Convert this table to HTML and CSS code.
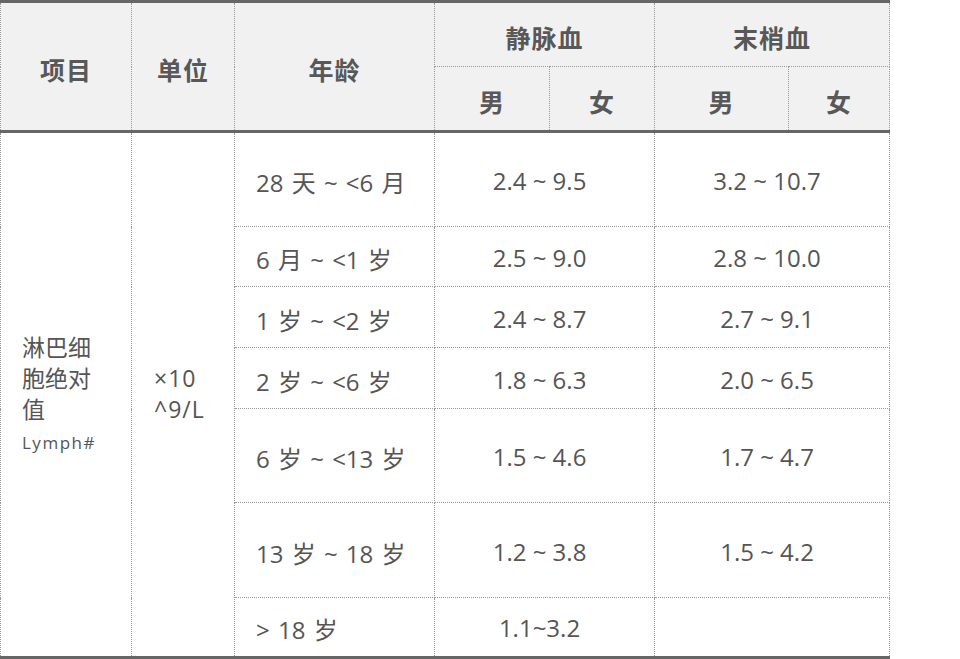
FILE: index.html
```html
<!DOCTYPE html>
<html lang="zh">
<head>
<meta charset="utf-8">
<link rel="stylesheet" href="styles.css">
</head>
<body>
<table class="ref">
  <colgroup>
    <col class="c1"><col class="c2"><col class="c3"><col class="c4"><col class="c5"><col class="c6"><col class="c7">
  </colgroup>
  <thead>
    <tr class="h1">
      <th rowspan="2">项目</th>
      <th rowspan="2">单位</th>
      <th rowspan="2">年龄</th>
      <th colspan="2">静脉血</th>
      <th colspan="2">末梢血</th>
    </tr>
    <tr class="h2">
      <th>男</th><th>女</th><th>男</th><th>女</th>
    </tr>
  </thead>
  <tbody>
    <tr class="r1">
      <td rowspan="7" class="item">淋巴细<br>胞绝对<br>值<br><span class="en">Lymph#</span></td>
      <td rowspan="7" class="unit">×10<br>^9/L</td>
      <td class="age">28 天 ~ &lt;6 月</td>
      <td colspan="2" class="val">2.4 ~ 9.5</td>
      <td colspan="2" class="val">3.2 ~ 10.7</td>
    </tr>
    <tr class="r2">
      <td class="age">6 月 ~ &lt;1 岁</td>
      <td colspan="2" class="val">2.5 ~ 9.0</td>
      <td colspan="2" class="val">2.8 ~ 10.0</td>
    </tr>
    <tr class="r3">
      <td class="age">1 岁 ~ &lt;2 岁</td>
      <td colspan="2" class="val">2.4 ~ 8.7</td>
      <td colspan="2" class="val">2.7 ~ 9.1</td>
    </tr>
    <tr class="r4">
      <td class="age">2 岁 ~ &lt;6 岁</td>
      <td colspan="2" class="val">1.8 ~ 6.3</td>
      <td colspan="2" class="val">2.0 ~ 6.5</td>
    </tr>
    <tr class="r5">
      <td class="age">6 岁 ~ &lt;13 岁</td>
      <td colspan="2" class="val">1.5 ~ 4.6</td>
      <td colspan="2" class="val">1.7 ~ 4.7</td>
    </tr>
    <tr class="r6">
      <td class="age">13 岁 ~ 18 岁</td>
      <td colspan="2" class="val">1.2 ~ 3.8</td>
      <td colspan="2" class="val">1.5 ~ 4.2</td>
    </tr>
    <tr class="r7">
      <td class="age">&gt; 18 岁</td>
      <td colspan="2" class="val">1.1~3.2</td>
      <td colspan="2" class="val"></td>
    </tr>
  </tbody>
</table>
</body>
</html>
```
FILE: styles.css
```css
html, body {
  margin: 0;
  padding: 0;
  background: #ffffff;
}

body {
  font-family: "Open Sans", "Noto Sans CJK SC", sans-serif;
  color: #555555;
}

.ref {
  border-collapse: collapse;
  table-layout: fixed;
  width: 890px;
  border-top: 3px solid #666666;
  border-bottom: 4px solid #666666;
}

.c1 { width: 131px; }
.c2 { width: 103px; }
.c3 { width: 200px; }
.c4 { width: 115px; }
.c5 { width: 105px; }
.c6 { width: 134px; }
.c7 { width: 101px; }

.ref th,
.ref td {
  border: 1px dotted #9a9a9a;
  padding: 0;
}

.ref thead th {
  background: #f1f1f1;
  font-family: "Noto Sans CJK SC", sans-serif;
  font-weight: 700;
  font-size: 25px;
  color: #585858;
  letter-spacing: 1px;
  text-align: center;
  vertical-align: middle;
  padding-top: 4px;
}

.ref thead tr.h2 th,
.ref thead tr.h1 th[rowspan] {
  border-bottom: 3px solid #666666;
}

.h1 { height: 65px; }
.h2 { height: 65px; }

.r1 { height: 95px; }
.r2 { height: 60px; }
.r3 { height: 61px; }
.r4 { height: 61px; }
.r5 { height: 94px; }
.r6 { height: 95px; }
.r7 { height: 60px; }

.ref td {
  font-size: 24px;
  vertical-align: middle;
}

.ref td.item {
  text-align: left;
  padding-left: 21px;
  line-height: 31px;
  font-size: 23px;
}

.item .en {
  display: inline-block;
  font-size: 17px;
  line-height: 24px;
  letter-spacing: 1.5px;
}

.ref td.unit {
  text-align: left;
  padding-left: 22px;
  line-height: 31px;
  font-size: 23px;
  letter-spacing: 1px;
}

.ref td.age {
  text-align: left;
  padding-left: 21px;
  padding-top: 4px;
  word-spacing: 2px;
}

.ref td.val {
  text-align: center;
  padding-top: 2px;
  padding-right: 10px;
}
```
